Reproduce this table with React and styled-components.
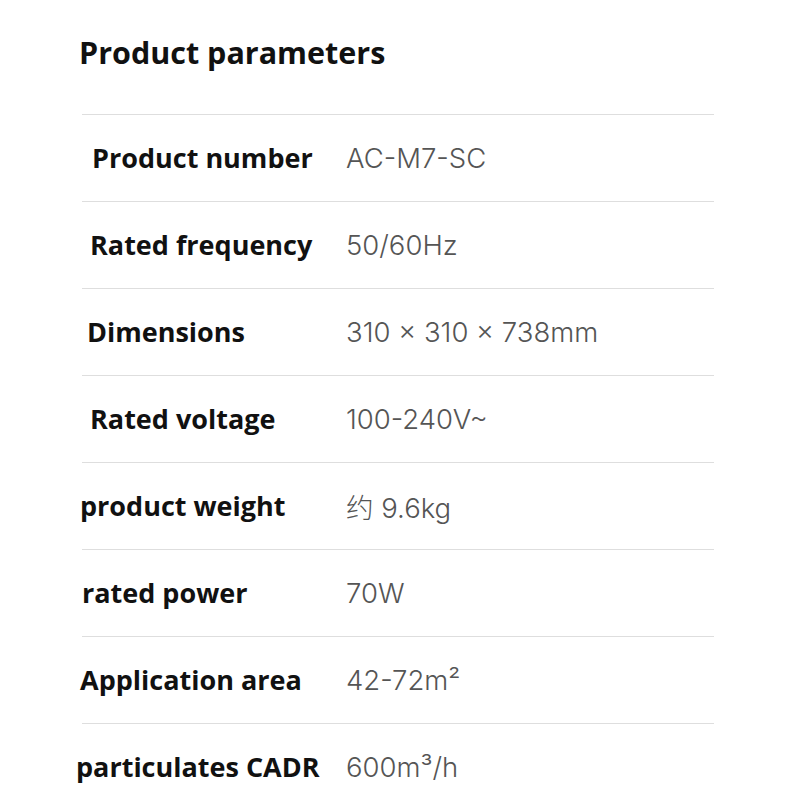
import React from "react";
import styled, { createGlobalStyle } from "styled-components";

const Global = createGlobalStyle`
  html, body { margin: 0; padding: 0; background: #fff; }
  body { font-family: "Open Sans", "Noto Sans CJK SC", sans-serif; }
`;

const Page = styled.div`
  width: 807px;
  height: 801px;
  overflow: hidden;
  padding: 32px 0 0 79px;
  box-sizing: border-box;
`;

const Title = styled.h1`
  margin: 0;
  font-family: "Open Sans", sans-serif;
  font-weight: 700;
  font-size: 30.5px;
  line-height: 40px;
  color: #111;
  height: 82px;
`;

const Table = styled.div`
  margin-left: 3px;
  width: 632px;
`;

const Row = styled.div`
  display: flex;
  align-items: center;
  height: 87px;
  border-top: 1px solid #dedede;
  box-sizing: border-box;
`;

const Label = styled.div`
  flex: none;
  width: ${(p) => 264 - p.$indent}px;
  margin-left: ${(p) => p.$indent}px;
  font-family: "Open Sans", sans-serif;
  font-weight: 700;
  font-size: 27px;
  color: #111;
  white-space: nowrap;
  margin-top: -2px;
`;

const Value = styled.div`
  font-family: "Inter", "Noto Sans CJK SC", sans-serif;
  font-weight: 300;
  font-size: 27.5px;
  color: #555;
  white-space: nowrap;
`;

const rows = [
  ["Product number", "AC-M7-SC", 10],
  ["Rated frequency", "50/60Hz", 8],
  ["Dimensions", "310 × 310 × 738mm", 5],
  ["Rated voltage", "100-240V~", 8],
  ["product weight", "约 9.6kg", -2],
  ["rated power", "70W", 0],
  ["Application area", "42-72m²", -2],
  ["particulates CADR", "600m³/h", -6],
];

export default function App() {
  return (
    <>
      <Global />
      <Page>
        <Title>Product parameters</Title>
        <Table>
          {rows.map(([l, v, i]) => (
            <Row key={l}>
              <Label $indent={i}>{l}</Label>
              <Value>{v}</Value>
            </Row>
          ))}
        </Table>
      </Page>
    </>
  );
}
